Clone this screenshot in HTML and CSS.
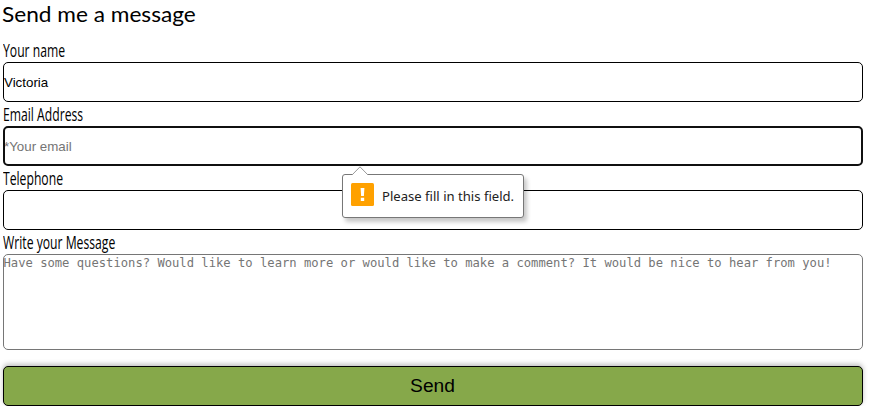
FILE: index.html
```
<!DOCTYPE html>
<html lang="en">
<head>
<meta charset="utf-8">
<title>Send me a message</title>
<link rel="stylesheet" href="styles.css">
</head>
<body>
<form class="contact" novalidate>
  <h2 class="title"><span class="wide">Send me a message</span></h2>
  <label class="label" for="name"><span class="narrow">Your name</span></label>
  <input class="field" id="name" type="text" value="Victoria">
  <label class="label" for="email"><span class="narrow">Email Address</span></label>
  <div class="field-wrap">
    <input class="field field-active" id="email" type="email" placeholder="*Your email">
    <div class="tip" role="alert">
      <svg class="tip-arrow" width="18" height="9" viewBox="0 0 18 9"><path d="M1 9 9 .8 17 9" fill="#fff" stroke="#999"/></svg>
      <svg class="tip-icon" width="23" height="23" viewBox="0 0 23 23"><rect width="23" height="23" rx="1.5" fill="#ffa100"/><path d="M9.6 5h3.8l-.5 8h-2.8zM9.8 14.7h3.4v3.2H9.8z" fill="#fff"/></svg>
      <span class="tip-text">Please fill in this field.</span>
    </div>
  </div>
  <label class="label" for="phone"><span class="narrow">Telephone</span></label>
  <input class="field" id="phone" type="tel">
  <label class="label" for="message"><span class="narrow">Write your Message</span></label>
  <textarea class="field message" id="message" placeholder="Have some questions? Would like to learn more or would like to make a comment? It would be nice to hear from you!"></textarea>
  <button class="send" type="button">Send</button>
</form>
</body>
</html>
```
FILE: styles.css
```
* { box-sizing: border-box; }
body { margin: 0; background: #fff; color: #000; overflow: hidden; }
.contact { display: flex; flex-direction: column; width: 860px; margin-left: 3px; }
.title {
  margin: 0 0 10px;
  height: 28px;
  font: 400 20.5px/28px Lato, "Open Sans", sans-serif;
  white-space: nowrap;
}
.wide { display: inline-block; margin-left: -1px; transform: scaleX(1.105); transform-origin: 0 50%; }
.label { height: 24px; font: 400 17.4px/25px "Open Sans", sans-serif; white-space: nowrap; }
.narrow { display: inline-block; transform: scaleX(0.7); transform-origin: 0 50%; }
.field-wrap { position: relative; height: 40px; }
.field {
  display: block;
  width: 100%;
  height: 40px;
  margin: 0;
  padding: 0;
  border: 1px solid #000;
  border-radius: 5px;
  background: #fff;
  color: #000;
  font: 13.333px "Liberation Sans", Arial, sans-serif;
  outline: none;
}
.field::placeholder { color: #757575; opacity: 1; }
.field-active { border: 2px solid #101010; }
.field-active::placeholder { text-indent: -1px; }
.message {
  height: 96px;
  border-color: #767676;
  font: 12.18px/16px "DejaVu Sans Mono", monospace;
  resize: none;
  overflow: hidden;
  white-space: pre;
}
.message::placeholder { text-indent: -0.5px; }
.send {
  height: 40px;
  margin-top: 16px;
  padding: 0 1px 0 0;
  border: 1px solid #000;
  border-radius: 5px;
  background: #86a84a;
  box-shadow: 0 -2px 5px rgba(0, 0, 0, 0.25);
  color: #000;
  font: 19.2px "Liberation Sans", Arial, sans-serif;
}
.tip {
  position: absolute;
  left: 339px;
  top: 48px;
  z-index: 2;
  display: flex;
  align-items: center;
  gap: 8px;
  width: 182px;
  height: 44px;
  padding: 0 0 3px 8px;
  border: 1px solid #777;
  border-radius: 3px;
  background: #fff;
  box-shadow: 3px 4px 4px rgba(0, 0, 0, 0.22);
}
.tip-arrow { position: absolute; left: 8px; top: -9px; }
.tip-icon { flex: none; }
.tip-text { font: 13.1px/20px "Noto Sans", sans-serif; color: #222; white-space: nowrap; padding-top: 3px; }
```
